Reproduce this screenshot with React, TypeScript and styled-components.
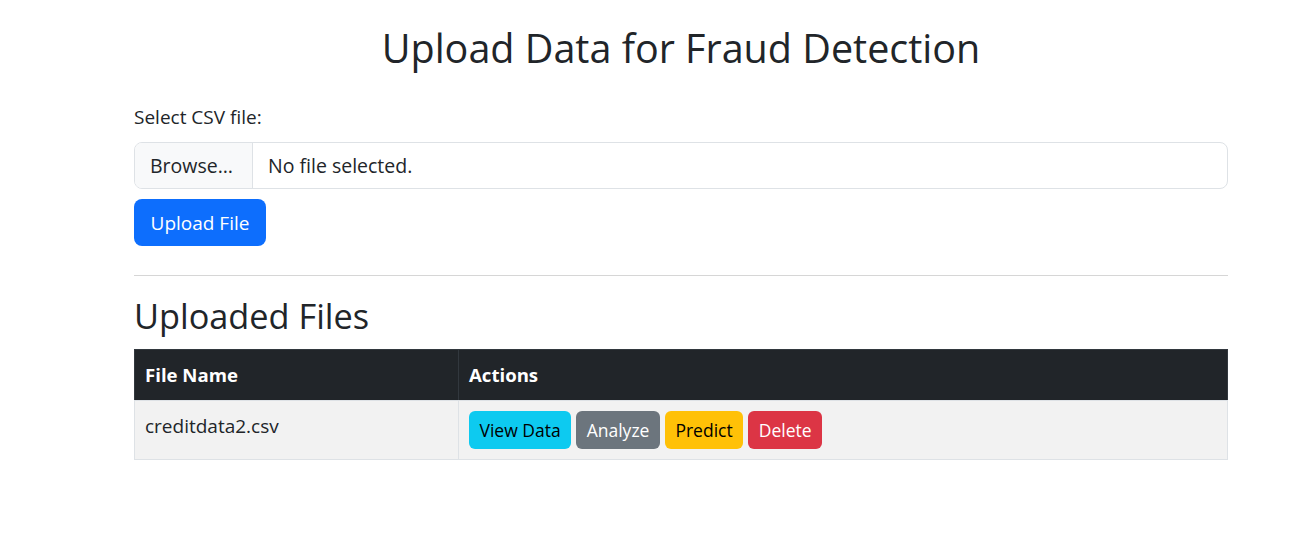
import React from "react";
import styled, { createGlobalStyle } from "styled-components";

const Global = createGlobalStyle`
  html, body { margin: 0; padding: 0; background: #fff; }
  body {
    font-family: "Open Sans", "Noto Sans", "Liberation Sans", sans-serif;
    color: #212529;
    font-size: 16px;
    line-height: 1.5;
  }
  * { box-sizing: border-box; }
`;

const Container = styled.main`
  width: 1094px;
  margin-left: 134px;
  padding-top: 25px;
`;

const Title = styled.h1`
  margin: 0 0 31px;
  font-size: 39.5px;
  font-weight: 400;
  line-height: 47px;
  text-align: center;
`;

const Label = styled.label`
  display: block;
  font-size: 19px;
  line-height: 28px;
  margin-bottom: 11px;
`;

const FileInput = styled.div`
  display: flex;
  height: 47px;
  border: 1px solid #dee2e6;
  border-radius: 8px;
  overflow: hidden;
  font-size: 19.5px;
`;

const BrowsePart = styled.div`
  display: flex;
  align-items: center;
  width: 118px;
  padding: 0 15px;
  background: #f8f9fa;
  border-right: 1px solid #dee2e6;
  white-space: nowrap;
`;

const FileStatus = styled.div`
  display: flex;
  align-items: center;
  padding: 0 15px;
`;

const UploadButton = styled.button`
  display: block;
  margin-top: 10px;
  height: 47px;
  width: 132px;
  border: none;
  border-radius: 8px;
  background: #0d6efd;
  color: #fff;
  font-family: inherit;
  font-size: 19px;
`;

const Rule = styled.hr`
  margin: 29px 0 19px;
  border: none;
  border-top: 1px solid #d6d6d6;
`;

const Subtitle = styled.h2`
  margin: 0 0 13px;
  font-size: 34.3px;
  font-weight: 400;
  line-height: 41px;
`;

const Table = styled.table`
  width: 100%;
  border-collapse: collapse;
  font-size: 19px;
  line-height: 30px;
`;

const HeadCell = styled.th<{ $w?: string }>`
  width: ${(p) => p.$w || "auto"};
  background: #212529;
  color: #fff;
  font-weight: 700;
  font-size: 18.6px;
  text-align: left;
  padding: 10px;
  border: 1px solid #32383e;
  border-bottom: 1px solid #dee2e6;
`;

const Cell = styled.td`
  background: #f2f2f2;
  padding: 10px;
  vertical-align: top;
  border: 1px solid #dee2e6;
`;

const Actions = styled.div`
  display: flex;
  gap: 5px;
`;

const ActionButton = styled.button<{ $bg: string; $fg: string }>`
  height: 38px;
  padding: 0 10.5px;
  border: none;
  border-radius: 6px;
  background: ${(p) => p.$bg};
  color: ${(p) => p.$fg};
  font-family: inherit;
  font-size: 17.5px;
`;

export default function App() {
  return (
    <>
      <Global />
      <Container>
        <Title>Upload Data for Fraud Detection</Title>
        <Label>Select CSV file:</Label>
        <FileInput>
          <BrowsePart>Browse…</BrowsePart>
          <FileStatus>No file selected.</FileStatus>
        </FileInput>
        <UploadButton>Upload File</UploadButton>
        <Rule />
        <Subtitle>Uploaded Files</Subtitle>
        <Table>
          <thead>
            <tr>
              <HeadCell $w="324px">File Name</HeadCell>
              <HeadCell>Actions</HeadCell>
            </tr>
          </thead>
          <tbody>
            <tr>
              <Cell>creditdata2.csv</Cell>
              <Cell>
                <Actions>
                  <ActionButton $bg="#0dcaf0" $fg="#000">View Data</ActionButton>
                  <ActionButton $bg="#6c757d" $fg="#fff">Analyze</ActionButton>
                  <ActionButton $bg="#ffc107" $fg="#000">Predict</ActionButton>
                  <ActionButton $bg="#dc3545" $fg="#fff">Delete</ActionButton>
                </Actions>
              </Cell>
            </tr>
          </tbody>
        </Table>
      </Container>
    </>
  );
}
